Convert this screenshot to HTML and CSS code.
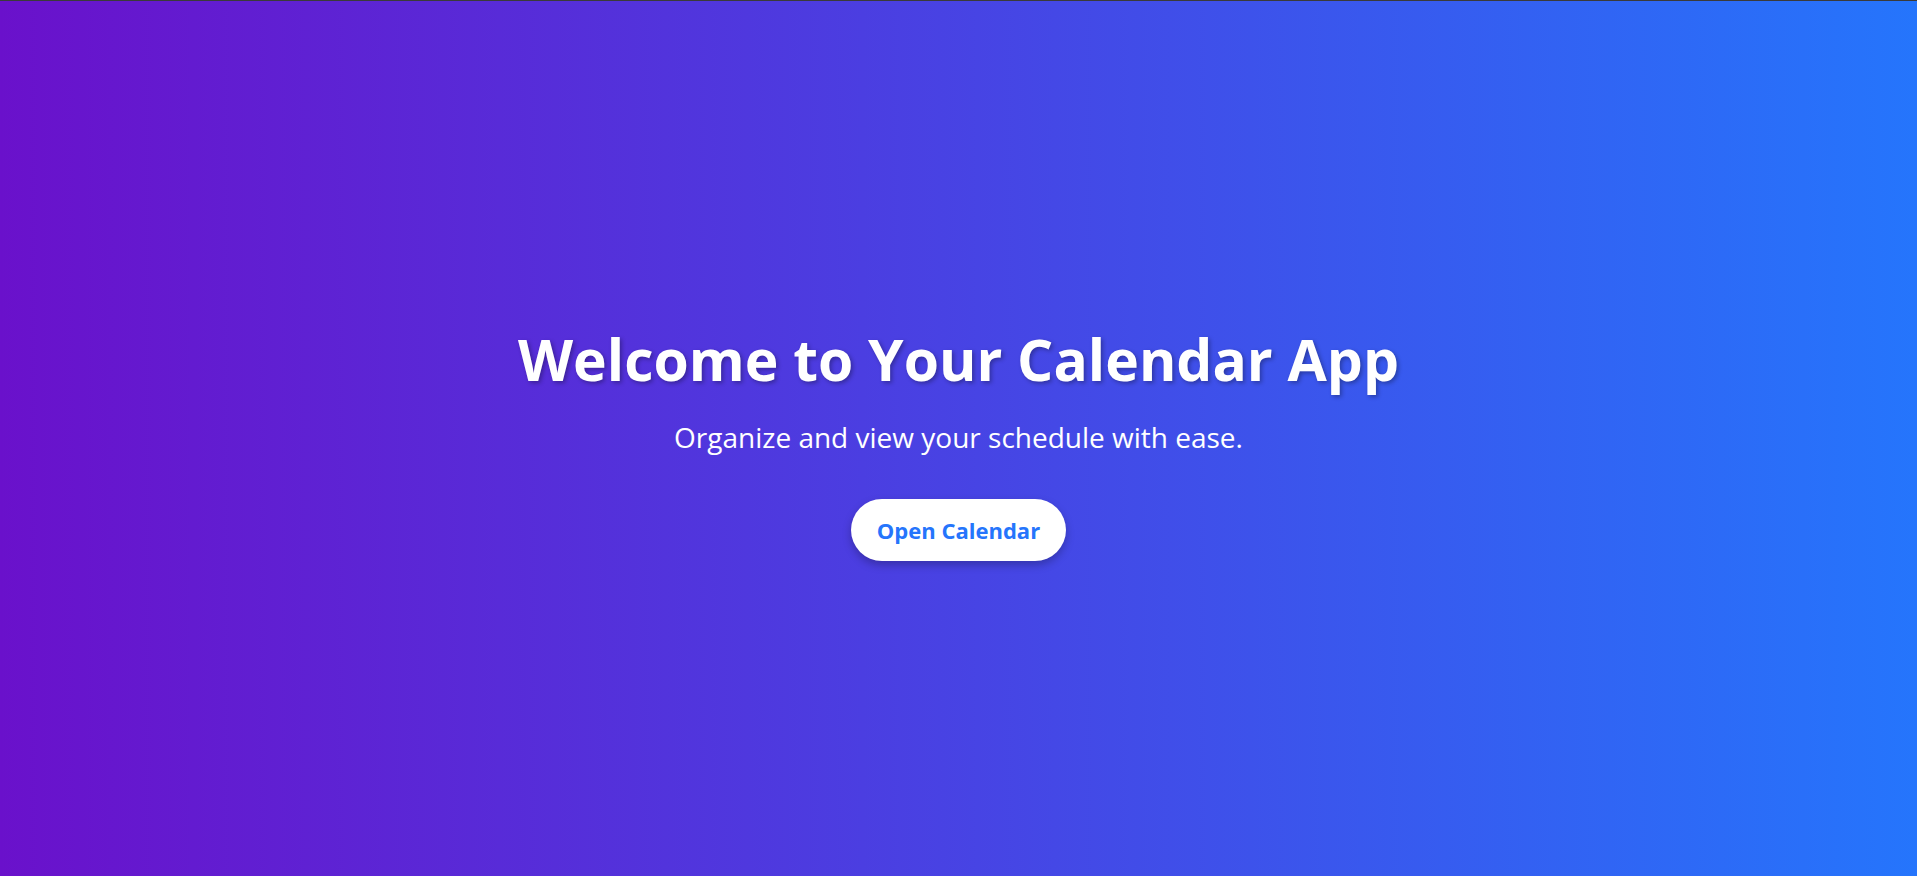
FILE: index.html
```html
<!DOCTYPE html>
<html lang="en">
<head>
<meta charset="utf-8">
<title>Calendar App</title>
<link rel="stylesheet" href="styles.css">
</head>
<body>
<main class="hero">
  <h1 class="hero-title">Welcome to Your Calendar App</h1>
  <p class="hero-subtitle">Organize and view your schedule with ease.</p>
  <button class="hero-button" type="button">Open Calendar</button>
</main>
</body>
</html>
```

FILE: styles.css
```css
html, body {
  margin: 0;
  padding: 0;
  height: 100%;
}
body {
  font-family: "Open Sans", "Noto Sans", sans-serif;
  border-top: 1px solid #3a3a3a;
  box-sizing: border-box;
  background: linear-gradient(to right, #6a11cb, #2575fc);
  color: #fff;
}
.hero {
  box-sizing: border-box;
  height: 100%;
  padding-top: 9px;
  display: flex;
  flex-direction: column;
  align-items: center;
  justify-content: center;
  text-align: center;
}
.hero-title {
  font-size: 57px;
  font-weight: 700;
  line-height: 1.2;
  margin: 0 0 25px;
  text-shadow: 2px 2px 4px rgba(0, 0, 0, 0.3);
}
.hero-subtitle {
  font-size: 28px;
  line-height: 1.3;
  margin: 0 0 44px;
}
.hero-button {
  font-family: inherit;
  font-size: 22px;
  font-weight: 700;
  color: #2575fc;
  background: #fff;
  border: none;
  border-radius: 31px;
  padding: 16px 26px;
  box-shadow: 0 4px 8px rgba(0, 0, 0, 0.25);
  cursor: pointer;
}
```
